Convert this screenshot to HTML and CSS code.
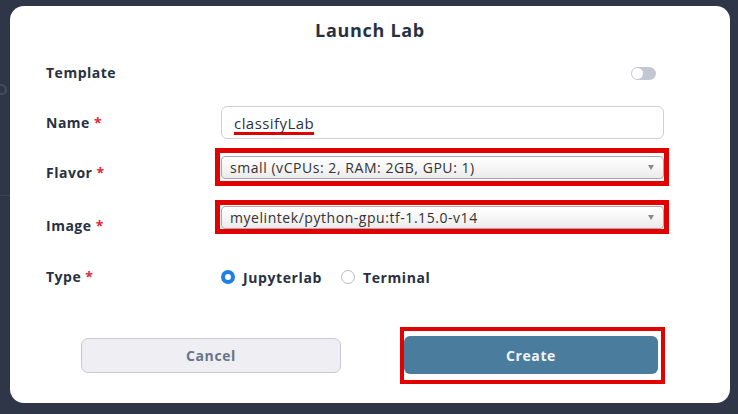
FILE: index.html
```html
<!DOCTYPE html>
<html>
<head>
<meta charset="utf-8">
<link rel="stylesheet" href="styles.css">
</head>
<body>
<div class="backdrop">
  <div class="ghost-o"></div>
  <div class="ghost-line"></div>
  <div class="modal">
    <h1 class="title">Launch Lab</h1>
    <div class="row row-template">
      <div class="label">Template</div>
      <div class="control control-right">
        <span class="toggle"><span class="knob"></span></span>
      </div>
    </div>
    <div class="row row-name">
      <div class="label">Name <span class="req">*</span></div>
      <div class="control">
        <div class="input"><span class="marked">classifyLab</span></div>
      </div>
    </div>
    <div class="row row-flavor">
      <div class="label">Flavor <span class="req">*</span></div>
      <div class="control">
        <div class="redbox">
          <div class="select"><span>small (vCPUs: 2, RAM: 2GB, GPU: 1)</span><span class="caret"></span></div>
        </div>
      </div>
    </div>
    <div class="row row-image">
      <div class="label">Image <span class="req">*</span></div>
      <div class="control">
        <div class="redbox">
          <div class="select"><span>myelintek/python-gpu:tf-1.15.0-v14</span><span class="caret"></span></div>
        </div>
      </div>
    </div>
    <div class="row row-type">
      <div class="label">Type <span class="req">*</span></div>
      <div class="control radios">
        <label class="radio"><span class="dot on"></span>Jupyterlab</label>
        <label class="radio"><span class="dot"></span>Terminal</label>
      </div>
    </div>
    <div class="footer">
      <button class="btn cancel">Cancel</button>
      <div class="redbox-btn"><button class="btn create">Create</button></div>
    </div>
  </div>
</div>
</body>
</html>
```
FILE: styles.css
```css
* { box-sizing: border-box; }
html, body { margin: 0; padding: 0; }
body {
  width: 738px;
  height: 414px;
  overflow: hidden;
  background: #2e3647;
  font-family: "Open Sans", "DejaVu Sans", sans-serif;
  color: #283142;
}
.backdrop {
  position: relative;
  width: 738px;
  height: 414px;
  padding: 6px 8px 11px 10px;
}
.ghost-o {
  position: absolute;
  left: -4px;
  top: 84px;
  width: 11px;
  height: 11px;
  border: 2px solid #454e5e;
  border-radius: 50%;
}
.ghost-line {
  position: absolute;
  left: 0;
  top: 195px;
  width: 10px;
  height: 1px;
  background: #3b4454;
}
.modal {
  position: relative;
  width: 720px;
  height: 397px;
  background: #fff;
  border-radius: 14px;
  padding: 14px 0 0 36px;
  display: flex;
  flex-direction: column;
}
.title {
  margin: 0 0 0 -36px;
  text-align: center;
  font-size: 18px;
  line-height: 20px;
  font-weight: 700;
  letter-spacing: 0.7px;
  color: #283142;
}
.row {
  display: flex;
  align-items: center;
}
.label {
  width: 169px;
  font-size: 14px;
  font-weight: 700;
  letter-spacing: 0.5px;
  color: #283142;
}
.req { color: #e0283a; }
.control {
  width: 454px;
}
.control-right {
  display: flex;
  justify-content: flex-end;
  padding-right: 13px;
}
.row-template { height: 26px; margin-top: 20px; }
.row-template .label { padding-bottom: 2px; }
.row-name { height: 33px; margin-top: 20px; }
.row-flavor { height: 38px; margin-top: 9px; }
.row-flavor .label { padding-top: 10px; }
.row-image { height: 34px; margin-top: 14px; }
.row-image .label { padding-top: 16px; }
.row-type { height: 26px; margin-top: 30px; }
.row-type .label { padding-bottom: 2px; }

.toggle {
  display: inline-flex;
  align-items: center;
  width: 25px;
  height: 13px;
  border-radius: 7px;
  background: #c3c7d2;
  padding: 1px;
}
.knob {
  width: 11px;
  height: 11px;
  border-radius: 50%;
  background: #fff;
}
.input {
  margin-left: 6px;
  width: 443px;
  height: 33px;
  border: 1px solid #ccd0d6;
  border-radius: 6px;
  padding: 0 12px;
  display: flex;
  align-items: center;
  font-size: 15px;
  letter-spacing: 0.45px;
  color: #2c3444;
}
.marked {
  border-bottom: 3px solid #e00000;
  line-height: 17px;
  margin-top: 4px;
}
.redbox {
  border: 5px solid #e30000;
  padding: 3px 0 3px 1px;
  width: 454px;
}
.row-flavor .redbox { height: 38px; padding-top: 3px; }
.row-image .redbox { height: 34px; padding-top: 1px; }
.select {
  width: 443px;
  height: 23px;
  border: 1px solid #a9a9a9;
  border-radius: 4px;
  background: linear-gradient(#ffffff 0%, #f6f6f6 50%, #ebebeb 100%);
  display: flex;
  align-items: center;
  justify-content: space-between;
  padding: 0 9px 0 8px;
  font-size: 14px;
  letter-spacing: 0.55px;
  color: #333;
}
.caret {
  width: 0;
  height: 0;
  border-left: 3.5px solid transparent;
  border-right: 3.5px solid transparent;
  border-top: 5px solid #8a8a8a;
}
.radios {
  display: flex;
  align-items: center;
  padding-left: 6px;
}
.radio {
  display: flex;
  align-items: center;
  font-size: 14px;
  font-weight: 700;
  letter-spacing: 0.6px;
  color: #283142;
  margin-right: 19px;
}
.dot {
  width: 14px;
  height: 14px;
  border-radius: 50%;
  border: 1px solid #b8bcc4;
  background: #fff;
  margin-right: 8px;
}
.dot.on {
  border: 4px solid #1e7fe8;
  background: #fff;
}
.footer {
  display: flex;
  align-items: center;
  margin-top: 37px;
  padding-left: 35px;
}
.btn {
  font-family: "Open Sans", "DejaVu Sans", sans-serif;
  font-size: 14px;
  font-weight: 700;
  letter-spacing: 0.6px;
  cursor: pointer;
}
.cancel {
  width: 260px;
  height: 35px;
  background: #efeff3;
  border: 1px solid #c6c8d4;
  border-radius: 7px;
  color: #6a7488;
}
.redbox-btn {
  margin-left: 59px;
  width: 265px;
  height: 57px;
  border: 4px solid #e30000;
  padding: 5px 4px 0 0;
}
.create {
  width: 254px;
  height: 38px;
  background: #4a7c9d;
  border: none;
  border-radius: 6px;
  color: #f2f5f8;
}
```
